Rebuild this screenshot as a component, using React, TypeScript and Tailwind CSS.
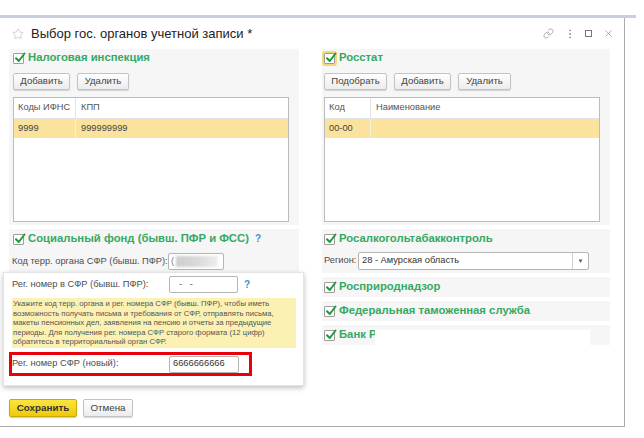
import { Link, EllipsisVertical, X, Star } from "lucide-react";

const font = { fontFamily: '"Liberation Sans", Arial, sans-serif' };

function Check({ focused }: { focused?: boolean }) {
  return (
    <span
      className={
        "relative inline-flex h-[11px] w-[11px] shrink-0 items-center justify-center rounded-[1px] border border-[#9c9c9c] bg-white " +
        (focused ? "outline-2 outline-[#f4d77a]" : "")
      }
    >
      <svg viewBox="0 0 12 12" className="absolute -top-[2px] left-[0px] h-[12px] w-[12px]">
        <path d="M2 6.2 L4.8 9 L10.5 1.5" fill="none" stroke="#1f9a3c" strokeWidth="2" strokeLinecap="round" strokeLinejoin="round" />
      </svg>
    </span>
  );
}

function GroupTitle({ text, focused, hint }: { text: string; focused?: boolean; hint?: boolean }) {
  return (
    <div className="flex h-[14px] items-center gap-[4px] whitespace-nowrap">
      <Check focused={focused} />
      <span className="text-[11.3px] font-bold leading-none text-[#35a962]">{text}</span>
      {hint && <span className="ml-[2px] text-[10px] font-bold leading-none text-[#3b8fd6]">?</span>}
    </div>
  );
}

function Btn({ label, w }: { label: string; w: string }) {
  return (
    <button
      className={
        "flex h-[17px] items-center justify-center whitespace-nowrap rounded-[2px] border border-[#c3c3c3] bg-gradient-to-b from-white to-[#ececec] text-[9.6px] text-[#444] shadow-[0_1px_1px_rgba(0,0,0,0.15)] " +
        w
      }
    >
      {label}
    </button>
  );
}

function Table({ c1, c2, v1, v2, w1 }: { c1: string; c2: string; v1: string; v2: string; w1: string }) {
  return (
    <div className="mt-[7px] h-[125px] w-[276px] whitespace-nowrap border border-[#bcbcbc] bg-white text-[9.3px] text-[#555]">
      <div className="flex h-[21px] border-b border-[#e2e2e2]">
        <div className={"flex items-center border-r border-[#e2e2e2] pl-[4px] " + w1}>{c1}</div>
        <div className="flex items-center pl-[5px]">{c2}</div>
      </div>
      <div className="flex h-[19px] bg-[#fbe39d] text-[#444]">
        <div className={"flex items-center border-r border-[#f3f0e0] pl-[4px] " + w1}>{v1}</div>
        <div className="flex items-center pl-[5px]">{v2}</div>
      </div>
    </div>
  );
}

export default function App() {
  return (
    <div className="h-[438px] w-[644px] overflow-hidden bg-white" style={font}>
      <div className="h-[15px]" />
      <div className="h-[3px] w-[636px] bg-[#c9cfdc]" />
      <div className="relative flex h-[409px] w-[625px] flex-col border-r border-b border-[#ababab]">
        {/* title bar */}
        <div className="flex h-[31px] items-center pl-[12px] pr-[10px]">
          <Star size={12} strokeWidth={1.4} className="text-[#bdbdbd]" />
          <span className="ml-[7px] whitespace-nowrap text-[13px] text-[#222]">Выбор гос. органов учетной записи *</span>
          <div className="ml-auto flex items-center text-[#8a8a8a]">
            <Link size={11} strokeWidth={1.5} className="mr-[10px]" />
            <EllipsisVertical size={12} strokeWidth={1.8} className="mr-[9px]" />
            <span className="mr-[11px] h-[7px] w-[7px] border border-[#777]" />
            <X size={11} strokeWidth={1.5} />
          </div>
        </div>

        <div className="flex gap-[23px] pl-[9px]">
          {/* left column */}
          <div className="flex w-[290px] flex-col gap-[4px]">
            <div className="bg-[#f6f6f6] px-[4px] pt-[2px] pb-[3px]">
              <GroupTitle text="Налоговая инспекция" />
              <div className="mt-[8px] flex gap-[7px]">
                <Btn label="Добавить" w="w-[57px]" />
                <Btn label="Удалить" w="w-[52px]" />
              </div>
              <Table c1="Коды ИФНС" c2="КПП" v1="9999" v2="999999999" w1="w-[62px]" />
            </div>
            <div className="h-[50px] bg-[#f6f6f6] px-[4px] pt-[3px]">
              <GroupTitle text="Социальный фонд (бывш. ПФР и ФСС)" hint />
              <div className="mt-[7px] flex h-[17px] items-center whitespace-nowrap text-[9.3px] text-[#4d4d4d]">
                <span className="-ml-[1px] w-[156px] shrink-0">Код терр. органа СФР (бывш. ПФР):</span>
                <div className="flex h-[17px] w-[56px] items-center rounded-[2px] border border-[#b5b5b5] bg-white pl-[2px]">
                  <span className="text-[#777]">(</span>
                  <span className="ml-[2px] h-[11px] w-[42px] bg-gradient-to-r from-[#cfcfcf] via-[#d9d9d9] to-[#eeeeee] blur-[1px]" />
                </div>
              </div>
            </div>
          </div>

          {/* right column */}
          <div className="flex w-[288px] flex-col gap-[4px]">
            <div className="bg-[#f6f6f6] pl-[2px] pr-[10px] pt-[2px] pb-[3px]">
              <GroupTitle text="Росстат" focused />
              <div className="mt-[8px] flex gap-[7px]">
                <Btn label="Подобрать" w="w-[63px]" />
                <Btn label="Добавить" w="w-[57px]" />
                <Btn label="Удалить" w="w-[53px]" />
              </div>
              <Table c1="Код" c2="Наименование" v1="00-00" v2="" w1="w-[46px]" />
            </div>
            <div className="h-[44px] bg-[#f6f6f6] pl-[2px] pt-[3px]">
              <GroupTitle text="Росалкогольтабакконтроль" />
              <div className="mt-[6px] flex h-[18px] items-center whitespace-nowrap text-[9.3px] text-[#4d4d4d]">
                <span className="w-[34px] shrink-0">Регион:</span>
                <div className="flex h-[18px] w-[231px] items-center rounded-[2px] border border-[#b5b5b5] bg-white">
                  <span className="flex-1 pl-[3px] text-[#333]">28 - Амурская область</span>
                  <span className="flex h-full w-[16px] items-center justify-center border-l border-[#cfcfcf] text-[6px] text-[#555]">▼</span>
                </div>
              </div>
            </div>
            <div className="flex h-[20px] items-center bg-[#f6f6f6] pl-[2px]">
              <GroupTitle text="Росприроднадзор" />
            </div>
            <div className="flex h-[20px] items-center bg-[#f6f6f6] pl-[2px]">
              <GroupTitle text="Федеральная таможенная служба" />
            </div>
            <div className="flex h-[20px] items-center bg-[#f6f6f6] pl-[2px]">
              <GroupTitle text="Банк России" hint />
            </div>
          </div>
        </div>

        {/* white patch over the bank group */}
        <div className="absolute left-[375px] top-[312px] h-[16px] w-[215px] bg-white" />

        {/* popup over the social fund group */}
        <div className="absolute left-[3px] top-[254px] h-[114px] w-[301px] border border-[#e4e4e4] bg-white shadow-[0_2px_5px_rgba(0,0,0,0.25)]">
          <div className="mt-[3px] flex h-[17px] items-center whitespace-nowrap pl-[8px] text-[9.3px] text-[#4d4d4d]">
            <span className="w-[157px] shrink-0">Рег. номер в СФР (бывш. ПФР):</span>
            <div className="flex h-[17px] w-[69px] items-center whitespace-pre rounded-[2px] border border-[#b5b5b5] bg-white pl-[9px] text-[#555]">
              -   -
            </div>
            <span className="ml-[6px] text-[10px] font-bold text-[#3b8fd6]">?</span>
          </div>
          <div className="ml-[8px] mt-[5px] h-[50px] w-[284px] whitespace-nowrap bg-[#fbf1b3] px-[1px] pt-[1px] text-[7.7px] leading-[9.6px] text-[#555]">
            Укажите код терр. органа и рег. номера СФР (бывш. ПФР), чтобы иметь
            <br />
            возможность получать письма и требования от СФР, отправлять письма,
            <br />
            макеты пенсионных дел, заявления на пенсию и отчеты за предыдущие
            <br />
            периоды. Для получения рег. номера СФР старого формата (12 цифр)
            <br />
            обратитесь в территориальный орган СФР.
          </div>
          <div className="ml-[5px] mt-[4px] flex h-[24px] w-[243px] items-center whitespace-nowrap border-[3px] border-[#e8000b] text-[9.3px] text-[#4d4d4d]">
            <span className="w-[157px] shrink-0">Рег. номер СФР (новый):</span>
            <div className="flex h-[17px] w-[70px] items-center rounded-[2px] border border-[#b5b5b5] bg-white pl-[3px] text-[#333]">
              6666666666
            </div>
          </div>
        </div>

        {/* footer */}
        <div className="mt-auto mb-[9px] flex gap-[6px] pl-[9px]">
          <button className="flex h-[18px] w-[68px] items-center justify-center rounded-[2px] border border-[#c9a900] bg-gradient-to-b from-[#fbe53c] to-[#f0c900] text-[9.8px] font-bold text-[#333] shadow-[0_1px_1px_rgba(0,0,0,0.2)]">
            Сохранить
          </button>
          <button className="flex h-[18px] w-[50px] items-center justify-center rounded-[2px] border border-[#c3c3c3] bg-gradient-to-b from-white to-[#ececec] text-[9.8px] text-[#444] shadow-[0_1px_1px_rgba(0,0,0,0.15)]">
            Отмена
          </button>
        </div>
      </div>
    </div>
  );
}
